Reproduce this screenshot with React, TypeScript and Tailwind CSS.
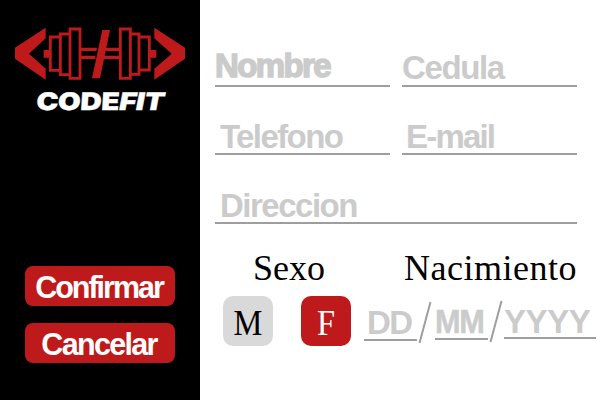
import React from "react";

function Logo() {
  return (
    <svg className="block h-[72px] w-[200px] shrink-0" viewBox="0 0 600 216" fill="#bf1a1b">
      <path d="M137 38V70L87 116L137 161V194L45 131V98Z" />
      <path d="M463 38V70L515 116L463 161V194L555 131V98Z" />
      <path d="M131 105H150V128H131ZM450 105H469V128H450Z" />
      <path d="M242 98H290V108H242ZM242 122H286V132H242ZM316 98H358V108H316ZM311 122H358V132H311Z" />
      <path d="M307 45H330L300 190H276Z" />
      <g fill="none" stroke="#bf1a1b" strokeWidth="8.5">
        <path d="M181 66H151V166H181M210 57H181V179H210" />
        <path d="M391 57H417V178H391M419 66H448V165H419" />
        <path d="M210 42H240V190H210ZM361 42H391V190H361Z" />
      </g>
    </svg>
  );
}

function ActionButton({ label, spacing }: { label: string; spacing: string }) {
  return (
    <button className="flex h-10 w-[150px] shrink-0 items-center justify-center rounded-lg bg-[#bf1a1b] pt-0.5 text-[30.5px] leading-none font-bold text-white">
      <span className={spacing}>{label}</span>
    </button>
  );
}

function Field({ label, box, text }: { label: string; box: string; text: string }) {
  return (
    <label className={"flex h-10 items-end border-b-2 border-[#9e9e9e] text-[33px] leading-8 font-bold whitespace-nowrap text-[#cbcbcb] " + box}>
      <span className={text}>{label}</span>
    </label>
  );
}

function Slash({ box }: { box: string }) {
  return (
    <svg className={"h-11 w-[14px] shrink-0 " + box} viewBox="0 0 14 44">
      <path d="M12.5 1L1.5 42" stroke="#9e9e9e" strokeWidth="2" />
    </svg>
  );
}

export default function App() {
  return (
    <div className="flex h-[400px] w-[600px] overflow-hidden bg-white font-['Liberation_Sans',sans-serif]">
      <aside className="flex w-[200px] shrink-0 flex-col items-center bg-black pt-[15px]">
        <Logo />
        <div className="flex h-7 w-[130px] items-center justify-center pt-0.5 font-['Inter',sans-serif] text-[24px] leading-none font-black text-white">
          <span className="origin-center scale-x-[1.22] -skew-x-3 tracking-[-0.2px] [-webkit-text-stroke:0.4px_#fff]">
            CODE<span className="inline-block -skew-x-6">FIT</span>
          </span>
        </div>
        <div className="mt-[151px] flex flex-col gap-[17px]">
          <ActionButton label="Confirmar" spacing="-ml-0.5 tracking-[-2px]" />
          <ActionButton label="Cancelar" spacing="-ml-0.5 tracking-[-1.7px]" />
        </div>
      </aside>

      <main className="flex w-[400px] flex-col pt-[47px] pl-[15px]">
        <div className="flex gap-3">
          <Field label="Nombre" box="w-[175px]" text="pb-[3px] tracking-[-1.6px] [-webkit-text-stroke:1.5px_#cbcbcb]" />
          <Field label="Cedula" box="w-[175px]" text="pb-px tracking-[-1.4px]" />
        </div>
        <div className="mt-7 flex gap-3">
          <Field label="Telefono" box="w-[175px]" text="ml-[5px] tracking-[-1.6px]" />
          <Field label="E-mail" box="w-[175px]" text="ml-1 tracking-[-1.8px]" />
        </div>
        <div className="mt-[29px] flex">
          <Field label="Direccion" box="w-[362px]" text="ml-[5px] tracking-[-1.5px]" />
        </div>

        <div className="mt-[26px] flex font-['Liberation_Serif',serif] text-[36px] leading-9 text-black">
          <h2 className="ml-[38px] w-[151px]">Sexo</h2>
          <h2 className="tracking-[0.5px]">Nacimiento</h2>
        </div>

        <div className="mt-2.5 flex h-[52px] items-start">
          <button className="ml-2 h-[50px] w-[50px] shrink-0 rounded-[10px] bg-[#d9d9d9] pt-1 font-['Liberation_Serif',serif] text-[36px] leading-none text-black">
            <span className="inline-block scale-x-[0.9]">M</span>
          </button>
          <button className="ml-7 h-[50px] w-[50px] shrink-0 rounded-[10px] bg-[#bf1a1b] pt-1 font-['Liberation_Serif',serif] text-[36px] leading-none text-white">
            <span className="inline-block scale-x-[0.9]">F</span>
          </button>
          <Field label="DD" box="ml-[13px] mt-[5px] w-[53px] shrink-0" text="ml-[3px] tracking-[-1.5px]" />
          <Slash box="ml-px mt-[5px]" />
          <Field label="MM" box="ml-[3px] mt-1 w-[53px] shrink-0" text="origin-left scale-x-[0.93] tracking-[-1.5px] [-webkit-text-stroke:0.5px_#cbcbcb]" />
          <Slash box="ml-px mt-1" />
          <Field label="YYYY" box="ml-px mt-[3px] w-[92px] shrink-0" text="-mb-px tracking-[-0.4px]" />
        </div>
      </main>
    </div>
  );
}
